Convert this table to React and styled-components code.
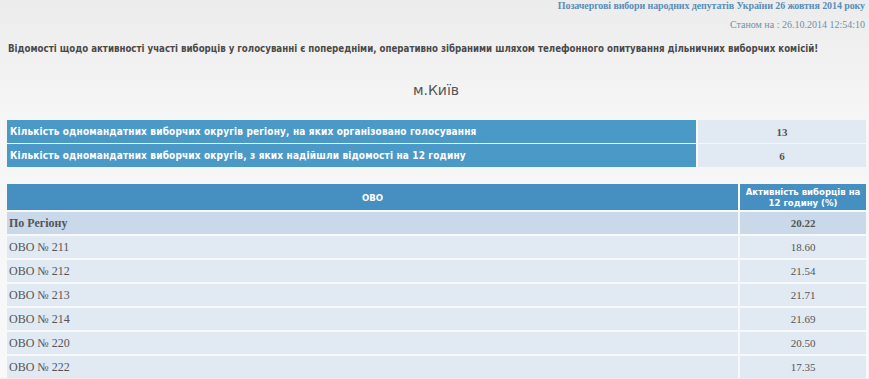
import React from "react";
import styled, { createGlobalStyle } from "styled-components";

const GlobalStyle = createGlobalStyle`
  html, body {
    margin: 0;
    padding: 0;
  }
  body {
    background: linear-gradient(#ececec 0, #f6f6f6 120px, #f8f8f8 100%);
    font-family: "Liberation Serif", serif;
    color: #555;
  }
`;

const stats = [
  { label: "Кількість одномандатних виборчих округів регіону, на яких організовано голосування", value: "13" },
  { label: "Кількість одномандатних виборчих округів, з яких надійшли відомості на 12 годину", value: "6" },
];

const rows = [
  { name: "По Регіону", value: "20.22", total: true },
  { name: "ОВО № 211", value: "18.60" },
  { name: "ОВО № 212", value: "21.54" },
  { name: "ОВО № 213", value: "21.71" },
  { name: "ОВО № 214", value: "21.69" },
  { name: "ОВО № 220", value: "20.50" },
  { name: "ОВО № 222", value: "17.35" },
];

export default function App() {
  return (
    <Page>
      <GlobalStyle />
      <Header>
        <Title>Позачергові вибори народних депутатів України 26 жовтня 2014 року</Title>
        <Stamp>Станом на : 26.10.2014 12:54:10</Stamp>
      </Header>
      <Notice>
        Відомості щодо активності участі виборців у голосуванні є попередніми, оперативно зібраними шляхом
        телефонного опитування дільничних виборчих комісій!
      </Notice>
      <Region>м.Київ</Region>
      <StatsTable>
        <tbody>
          {stats.map((s) => (
            <tr key={s.label}>
              <StatLabel>{s.label}</StatLabel>
              <StatValue>{s.value}</StatValue>
            </tr>
          ))}
        </tbody>
      </StatsTable>
      <DataTable>
        <thead>
          <tr>
            <HeadCell>ОВО</HeadCell>
            <HeadCell $narrow>Активність виборців на 12 годину (%)</HeadCell>
          </tr>
        </thead>
        <tbody>
          {rows.map((r) => (
            <Row key={r.name} $total={r.total}>
              <NameCell>{r.name}</NameCell>
              <NumCell>{r.value}</NumCell>
            </Row>
          ))}
        </tbody>
      </DataTable>
    </Page>
  );
}

const Page = styled.div`
  padding: 0 4px 0 7px;
`;

const Header = styled.div`
  display: flex;
  flex-direction: column;
  align-items: flex-end;
`;

const Title = styled.div`
  font-family: "Liberation Serif", serif;
  font-weight: bold;
  font-size: 10px;
  letter-spacing: -0.1px;
  color: #5a8db8;
  line-height: 12px;
`;

const Stamp = styled.div`
  font-family: "Liberation Serif", serif;
  font-size: 10px;
  color: #6f8fa8;
  line-height: 12px;
  margin-top: 7px;
`;

const Notice = styled.div`
  font-family: "DejaVu Sans Condensed", "DejaVu Sans", sans-serif;
  font-stretch: condensed;
  font-weight: bold;
  font-size: 9.65px;
  color: #4a4a4a;
  margin: 11px 0 0 1px;
  line-height: 14px;
`;

const Region = styled.div`
  text-align: center;
  font-family: "DejaVu Sans", sans-serif;
  font-size: 14px;
  color: #555;
  margin-top: 25px;
  line-height: 18px;
`;

const StatsTable = styled.table`
  width: 859px;
  border-collapse: separate;
  border-spacing: 0 1px;
  margin-top: 20px;
`;

const StatLabel = styled.td`
  background: #4b99c6;
  color: #fff;
  font-family: "DejaVu Sans Condensed", "DejaVu Sans", sans-serif;
  font-stretch: condensed;
  font-weight: bold;
  font-size: 10px;
  letter-spacing: 0.15px;
  height: 23px;
  padding: 0 0 0 3px;
  border-right: 2px solid #f8f8f8;
`;

const StatValue = styled.td`
  width: 168px;
  background: #e1e9f3;
  text-align: center;
  font-family: "Liberation Serif", serif;
  font-weight: bold;
  font-size: 11px;
  color: #555;
  padding: 0;
`;

const DataTable = styled.table`
  width: 859px;
  border-collapse: separate;
  border-spacing: 0;
  margin-top: 16px;
`;

const HeadCell = styled.th`
  background: #4590c0;
  color: #fff;
  font-family: "DejaVu Sans Condensed", "DejaVu Sans", sans-serif;
  font-stretch: condensed;
  font-weight: bold;
  font-size: 9.5px;
  line-height: 11px;
  height: 26px;
  padding: 0 2px;
  width: ${(p) => (p.$narrow ? "122px" : "auto")};
  border-left: ${(p) => (p.$narrow ? "2px solid #f8f8f8" : "none")};
`;

const Row = styled.tr`
  background: ${(p) => (p.$total ? "#c9d9ea" : "#e1e9f3")};
  font-weight: ${(p) => (p.$total ? "bold" : "normal")};
`;

const NameCell = styled.td`
  height: 22px;
  padding: 0 0 0 2px;
  font-family: "Liberation Serif", serif;
  font-size: 12px;
  color: #555;
  border-top: 2px solid #f6f8fb;
`;

const NumCell = styled.td`
  text-align: center;
  font-family: "Liberation Serif", serif;
  font-size: 11px;
  color: #555;
  border-top: 2px solid #f6f8fb;
  border-left: 2px solid #f6f8fb;
`;
